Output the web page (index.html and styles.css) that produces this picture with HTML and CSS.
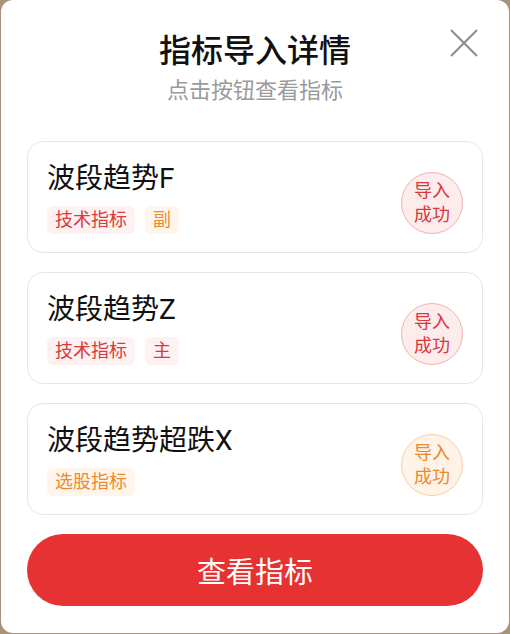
FILE: index.html
```html
<!DOCTYPE html>
<html lang="zh-CN">
<head>
    <meta charset="UTF-8">
    <meta name="viewport" content="width=device-width, initial-scale=1.0">
    <title>指标导入详情</title>
    <link rel="stylesheet" href="styles.css">
</head>
<body>

<div class="dialog">
    <button class="close" aria-label="关闭">
        <svg width="28" height="28" viewBox="0 0 28 28">
            <path d="M1 1 L27 27 M27 1 L1 27" stroke="#8c8c8c" stroke-width="2" fill="none"/>
        </svg>
    </button>

    <h1 class="title">指标导入详情</h1>
    <p class="subtitle">点击按钮查看指标</p>

    <div class="list">
        <div class="card">
            <div class="info">
                <div class="name">波段趋势F</div>
                <div class="tags">
                    <span class="tag red">技术指标</span>
                    <span class="tag orange">副</span>
                </div>
            </div>
            <div class="status red">导入<br>成功</div>
        </div>

        <div class="card">
            <div class="info">
                <div class="name">波段趋势Z</div>
                <div class="tags">
                    <span class="tag red">技术指标</span>
                    <span class="tag red">主</span>
                </div>
            </div>
            <div class="status red">导入<br>成功</div>
        </div>

        <div class="card">
            <div class="info">
                <div class="name">波段趋势超跌X</div>
                <div class="tags">
                    <span class="tag orange">选股指标</span>
                </div>
            </div>
            <div class="status orange">导入<br>成功</div>
        </div>
    </div>

    <button class="primary">查看指标</button>
</div>

</body>
</html>
```

FILE: styles.css
```css
body {
    margin: 0;
    background: #a8927a;
    font-family: Roboto, "Noto Sans CJK SC", sans-serif;
}

.dialog {
    position: relative;
    box-sizing: border-box;
    width: 508px;
    height: 633px;
    margin-left: 1px;
    padding: 31px 26px 0;
    background: #fff;
    border-radius: 12px;
}

.close {
    position: absolute;
    top: 29px;
    right: 31px;
    padding: 0;
    border: none;
    background: none;
    line-height: 0;
}

.title {
    margin: 0;
    font-size: 32px;
    line-height: 40px;
    font-weight: 500;
    color: #111;
    text-align: center;
}

.subtitle {
    margin: 6px 0 0;
    font-size: 22px;
    line-height: 28px;
    color: #9a9a9a;
    text-align: center;
}

.list {
    display: flex;
    flex-direction: column;
    gap: 19px;
    margin-top: 36px;
}

.card {
    display: flex;
    align-items: center;
    justify-content: space-between;
    padding: 19px 19px 18px;
    border: 1px solid #e6e6e6;
    border-radius: 16px;
}

.name {
    font-size: 28px;
    line-height: 36px;
    color: #111;
}

.tags {
    display: flex;
    gap: 10px;
    margin-top: 9px;
}

.tag {
    padding: 0 8px;
    font-size: 18px;
    line-height: 28px;
    border-radius: 6px;
}

.tag.red { color: #db3a3a; background: #fdf1f1; }
.tag.orange { color: #ee8a2c; background: #fff5ec; }

.status {
    display: flex;
    align-items: center;
    justify-content: center;
    width: 60px;
    height: 60px;
    margin-top: 10px;
    border-radius: 50%;
    font-size: 18px;
    line-height: 24px;
    text-align: center;
}

.status.red { color: #d9363e; background: #fdecec; border: 1px solid #efb4b4; }
.status.orange { color: #e8892e; background: #fff3e8; border: 1px solid #f5d0aa; }

.primary {
    display: block;
    width: 100%;
    height: 72px;
    margin-top: 19px;
    border: none;
    border-radius: 36px;
    background: #e63232;
    color: #fff;
    font-family: inherit;
    font-size: 29px;
}
```
